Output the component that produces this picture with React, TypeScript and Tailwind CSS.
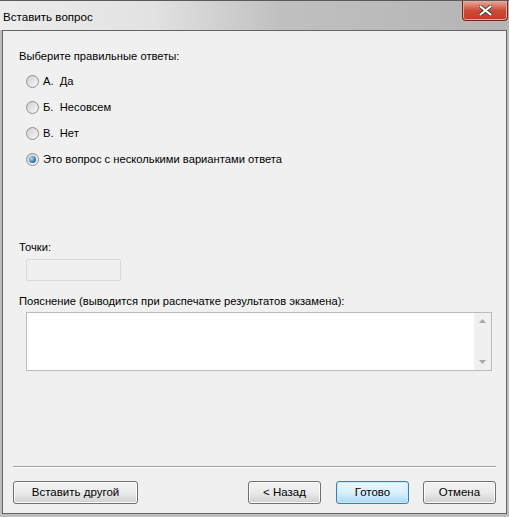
import React from "react";

const answers = [
  { label: "А.  Да", checked: false },
  { label: "Б.  Несовсем", checked: false },
  { label: "В.  Нет", checked: false },
  { label: "Это вопрос с несколькими вариантами ответа", checked: true },
];

function Radio({ checked }: { checked: boolean }) {
  return (
    <span className="relative inline-flex h-[13px] w-[13px] shrink-0 items-center justify-center rounded-full border border-[#8e8f8f] bg-gradient-to-br from-[#d0d0d0] to-[#f8f8f8]">
      {checked && (
        <span className="h-[7px] w-[7px] rounded-full bg-[radial-gradient(circle_at_35%_35%,#a9dcf7,#1f6fb4_70%,#0d4780)]" />
      )}
    </span>
  );
}

function Button({
  children,
  primary,
  className = "",
}: {
  children: React.ReactNode;
  primary?: boolean;
  className?: string;
}) {
  return (
    <button
      type="button"
      className={[
        "h-[23px] rounded-[3px] border text-[11.5px] text-black",
        primary
          ? "border-[#3c7fb1] bg-gradient-to-b from-[#eaf6fd] via-[#d9f0fc] to-[#a7d9f5] shadow-[inset_0_0_0_1px_#cbe9fb]"
          : "border-[#707070] bg-gradient-to-b from-[#f2f2f2] via-[#ebebeb] to-[#cfcfcf] shadow-[inset_0_0_0_1px_#fcfcfc]",
        className,
      ].join(" ")}
    >
      {children}
    </button>
  );
}

export default function App() {
  return (
    <div
      className="h-[517px] w-[509px] overflow-hidden bg-[#bdbdbd] text-[11.2px] text-black"
      style={{ fontFamily: '"Liberation Sans", Arial, sans-serif' }}
    >
      {/* title bar */}
      <div className="relative h-[30px] border-t border-[#5a5a5a] bg-[linear-gradient(90deg,#ececec_0%,#e2e2e2_30%,#c0c0c0_55%,#b4b4b4_100%)]">
        <div className="pl-[3px] pt-[10px] text-[11.6px] leading-none text-black">
          Вставить вопрос
        </div>
        <div className="absolute right-[1px] top-0 flex h-[20px] w-[46px] items-center justify-center rounded-b-[4px] border border-t-0 border-[#6e2a22] bg-gradient-to-b from-[#e8a89c] via-[#cc4a36] to-[#c23c25] shadow-[inset_0_0_0_1px_#eba59a]">
          <svg width="13" height="11" viewBox="0 0 13 11">
            <path
              d="M1.5 1.5 L11.5 9.5 M11.5 1.5 L1.5 9.5"
              stroke="#3a3a3a"
              strokeWidth="3.6"
              strokeLinecap="round"
            />
            <path
              d="M1.5 1.5 L11.5 9.5 M11.5 1.5 L1.5 9.5"
              stroke="#ffffff"
              strokeWidth="2.2"
              strokeLinecap="round"
            />
          </svg>
        </div>
      </div>

      {/* client area */}
      <div className="ml-[2px] mr-[2px] flex h-[484px] flex-col border border-[#646464] bg-[#f0f0f0]">
        <div className="flex flex-1 flex-col px-[16px] pt-[18px]">
          <div className="leading-[14px]">Выберите правильные ответы:</div>
          <div className="mt-[11px] flex flex-col gap-[12px] pl-[7px]">
            {answers.map((a) => (
              <label key={a.label} className="flex h-[14px] items-center gap-[4px]">
                <Radio checked={a.checked} />
                <span className="whitespace-pre leading-[14px]">{a.label}</span>
              </label>
            ))}
          </div>

          <div className="mt-[74px] leading-[14px]">Точки:</div>
          <div className="ml-[7px] mt-[5px] h-[22px] w-[95px] rounded-[2px] border border-[#d9d9d9] bg-[#f0f0f0]" />

          <div className="mt-[13px] leading-[14px]">
            Пояснение (выводится при распечатке результатов экзамена):
          </div>
          <div className="ml-[7px] mt-[4px] flex h-[59px] w-[466px] border border-[#bcbcbc] bg-white">
            <div className="flex-1" />
            <div className="flex w-[17px] flex-col items-center justify-between bg-[#f0f0f0] py-[6px]">
              <svg width="7" height="4" viewBox="0 0 7 4">
                <path d="M0 4 L3.5 0 L7 4 Z" fill="#a8a8a8" />
              </svg>
              <svg width="7" height="4" viewBox="0 0 7 4">
                <path d="M0 0 L3.5 4 L7 0 Z" fill="#a8a8a8" />
              </svg>
            </div>
          </div>
        </div>

        <div className="mx-[10px] border-t border-[#a0a0a0] shadow-[0_1px_0_#ffffff]" />
        <div className="flex items-center px-[10px] pb-[9px] pt-[14px]">
          <Button className="w-[125px]">Вставить другой</Button>
          <div className="flex-1" />
          <Button className="w-[73px]">&lt; Назад</Button>
          <Button primary className="ml-[15px] w-[73px]">
            Готово
          </Button>
          <Button className="ml-[14px] w-[73px]">Отмена</Button>
        </div>
      </div>
    </div>
  );
}
